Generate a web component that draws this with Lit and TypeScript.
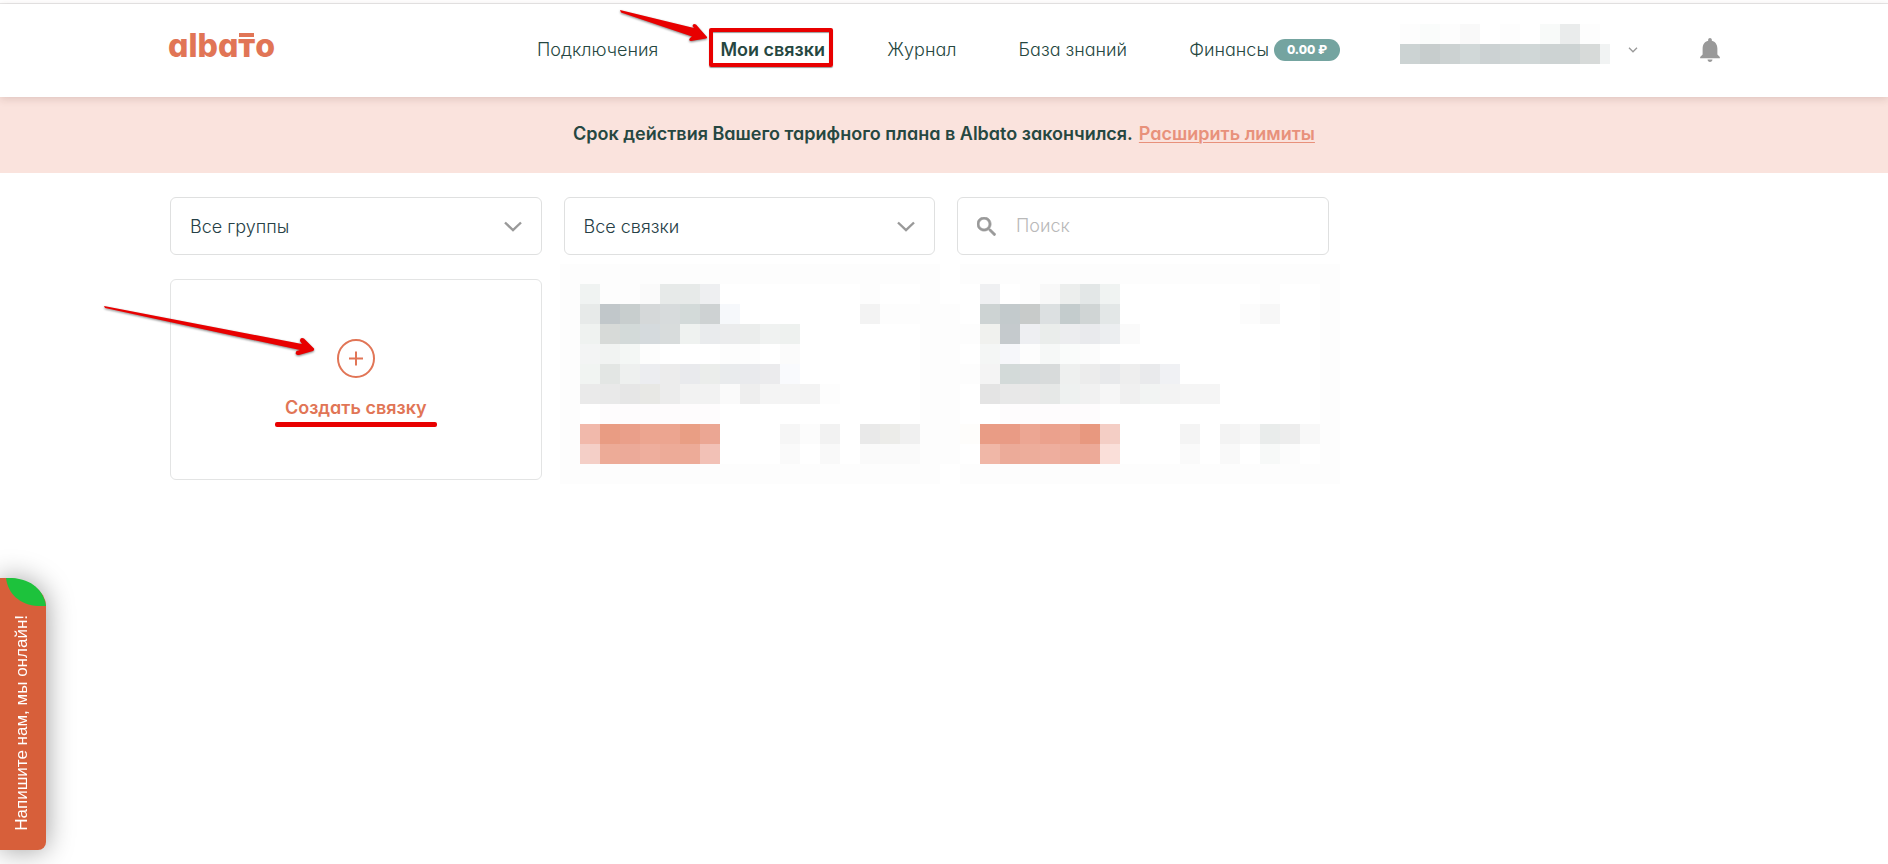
import { LitElement, html, svg, css } from "lit";
import { customElement, property, state } from "lit/decorators.js";

/** One run of equally coloured cells: column, row, length in cells, fill. */
type Run = [number, number, number, string];

const ACCOUNT_CELLS: Run[] = [
  [0, 0, 1, "#fdfdfd"], [1, 0, 1, "#fafcfb"], [2, 0, 1, "#fdfdfd"], [3, 0, 1, "#f9f9f9"],
  [5, 0, 1, "#fdfdfd"], [7, 0, 1, "#f8faf9"], [8, 0, 1, "#eaecec"], [9, 0, 1, "#fdfdfd"],
  [0, 1, 1, "#ccd3d3"], [1, 1, 1, "#c7cdcd"], [2, 1, 1, "#ccd2d2"], [3, 1, 1, "#d1d8d8"],
  [4, 1, 1, "#ccd2d3"], [5, 1, 1, "#cfd5d5"], [6, 1, 1, "#d0d7d7"], [7, 1, 2, "#cdd3d3"],
  [9, 1, 1, "#d7dad9"], [10, 1, 0.5, "#f1f3f3"],
];

const FIRST_CELLS: Run[] = [
  [-1, -1, 19, "#fdfdfd"], [-1, 0, 1, "#fdfdfd"], [17, 0, 1, "#fdfdfd"],
  [0, 0, 1, "#f0f3f2"], [1, 0, 2, "#fdfdfd"], [3, 0, 1, "#fafafa"], [4, 0, 2, "#e7eae9"], [6, 0, 1, "#eeeff1"], [14, 0, 1, "#fdfdfd"],
  [0, 1, 1, "#e7eae9"], [1, 1, 1, "#c1c7ca"], [2, 1, 1, "#c8cece"], [3, 1, 1, "#d5d8d9"], [4, 1, 1, "#d7dbdc"], [5, 1, 1, "#d3dad9"], [6, 1, 1, "#ced2d3"], [7, 1, 1, "#f6f8fb"], [14, 1, 1, "#f3f3f3"], [15, 1, 2, "#fdfdfd"],
  [0, 2, 1, "#eff2f0"], [1, 2, 1, "#d7dad8"], [2, 2, 1, "#d3dad9"], [3, 2, 1, "#d5dadd"], [4, 2, 1, "#d8dcdc"], [5, 2, 1, "#eff2f0"], [6, 2, 1, "#e9ebed"], [7, 2, 1, "#ebeced"], [8, 2, 1, "#ebedec"], [9, 2, 1, "#f0f2f1"], [10, 2, 1, "#eef1ef"],
  [0, 3, 1, "#f3f4f4"], [1, 3, 1, "#f1f3f2"], [2, 3, 1, "#f4f7f5"], [3, 3, 1, "#fdfdfd"], [7, 3, 2, "#fdfdfd"], [10, 3, 1, "#fbfbfb"],
  [0, 4, 1, "#f1f4f2"], [1, 4, 1, "#e3e6e4"], [2, 4, 1, "#eef0ef"], [3, 4, 1, "#ecedf0"], [4, 4, 1, "#ececec"], [5, 4, 1, "#e9eaed"], [6, 4, 1, "#ebedeb"], [7, 4, 1, "#e9ebed"], [8, 4, 1, "#e9eaed"], [9, 4, 1, "#ebebed"], [10, 4, 1, "#f9fafd"],
  [0, 5, 1, "#eaeaea"], [1, 5, 1, "#e9e9e9"], [2, 5, 1, "#e6e6e6"], [3, 5, 1, "#e8e8e5"], [4, 5, 1, "#ececec"], [5, 5, 2, "#f2f2f2"], [7, 5, 1, "#fafafa"], [8, 5, 1, "#eeeeee"], [9, 5, 2, "#f4f4f4"], [11, 5, 1, "#f3f3f3"], [12, 5, 1, "#fdfdfd"],
  [1, 6, 6, "#fefcfd"],
  [0, 7, 1, "#f1b9ab"], [1, 7, 1, "#e99c83"], [2, 7, 1, "#ea9f8a"], [3, 7, 2, "#eca590"], [5, 7, 1, "#e99e84"], [6, 7, 1, "#eba693"], [10, 7, 1, "#f6f6f6"], [11, 7, 1, "#fcfcfc"], [12, 7, 1, "#f2f2f2"], [14, 7, 1, "#e9e9e9"], [15, 7, 1, "#ecece9"], [16, 7, 1, "#f0f0f0"],
  [0, 8, 1, "#f4cfc7"], [1, 8, 1, "#edab97"], [2, 8, 1, "#ecaa99"], [3, 8, 1, "#eeae9d"], [4, 8, 2, "#edab98"], [6, 8, 1, "#f2c1b6"], [10, 8, 1, "#fafafa"], [12, 8, 1, "#f9f9f9"], [14, 8, 3, "#fafafa"],
  [-1, 1, 1, "#fdfdfd"], [-1, 2, 1, "#fdfdfd"], [-1, 3, 1, "#fdfdfd"], [-1, 4, 1, "#fdfdfd"], [-1, 5, 1, "#fdfdfd"], [-1, 6, 1, "#fdfdfd"], [-1, 7, 1, "#fdfdfd"], [-1, 8, 1, "#fdfdfd"],
  [17, 1, 2, "#fdfdfd"], [17, 2, 2, "#fdfdfd"], [17, 3, 2, "#fdfdfd"], [17, 4, 2, "#fdfdfd"], [17, 5, 2, "#fdfdfd"], [17, 6, 2, "#fdfdfd"], [17, 7, 2, "#fdfdfd"], [17, 8, 2, "#fdfdfd"],
  [-1, 9, 19, "#fdfdfd"],
];

const SECOND_CELLS: Run[] = [
  [-1, -1, 19, "#fdfdfd"],
  [0, 0, 1, "#eff0f2"], [2, 0, 1, "#fdfdfd"], [3, 0, 1, "#f8f8f8"], [4, 0, 1, "#eceeed"], [5, 0, 1, "#e3e7e7"], [6, 0, 1, "#f0f3f2"], [14, 0, 1, "#fdfdfd"],
  [0, 1, 1, "#cdd3d3"], [1, 1, 1, "#c3cacc"], [2, 1, 1, "#c8cbca"], [3, 1, 1, "#dce0e1"], [4, 1, 1, "#c4cccd"], [5, 1, 1, "#d0d5d5"], [6, 1, 1, "#e3e7e7"], [13, 1, 1, "#fcfcfc"], [14, 1, 1, "#f7f7f7"],
  [-1, 2, 1, "#fdfdfd"], [0, 2, 1, "#f0f1ee"], [1, 2, 1, "#c5cacd"], [2, 2, 1, "#eeeff2"], [3, 2, 1, "#eaedeb"], [4, 2, 1, "#ecedef"], [5, 2, 1, "#e9eaed"], [6, 2, 1, "#eceef0"], [7, 2, 1, "#fafafa"],
  [0, 3, 1, "#f4f6f5"], [1, 3, 1, "#f6f7fa"], [2, 3, 1, "#fdfdfd"], [3, 3, 1, "#f6f8f7"], [4, 3, 1, "#fafcfb"], [5, 3, 1, "#fcfcfc"],
  [-1, 4, 1, "#fdfdfd"], [0, 4, 1, "#f4f4f4"], [1, 4, 1, "#d3dad9"], [2, 4, 1, "#d6dadb"], [3, 4, 1, "#d8dbdb"], [4, 4, 1, "#eef0ef"], [5, 4, 1, "#ececec"], [6, 4, 1, "#e8e9eb"], [7, 4, 1, "#eeeeee"], [8, 4, 1, "#e9eaec"], [9, 4, 1, "#f0f1f4"],
  [0, 5, 1, "#e4e4e4"], [1, 5, 1, "#e8e8e8"], [2, 5, 1, "#e9e8e8"], [3, 5, 1, "#e6e8e7"], [4, 5, 1, "#eef1f0"], [5, 5, 1, "#f1f1f1"], [6, 5, 1, "#f6f6f6"], [7, 5, 1, "#f0f0f0"], [8, 5, 1, "#f2f4f3"], [9, 5, 1, "#f3f3f3"], [10, 5, 2, "#f5f5f5"],
  [1, 6, 5, "#fefcfd"],
  [-1, 7, 1, "#fefdfb"], [0, 7, 1, "#e99c85"], [1, 7, 1, "#e99b85"], [2, 7, 1, "#eca693"], [3, 7, 1, "#eba18d"], [4, 7, 1, "#eba38e"], [5, 7, 1, "#e8987f"], [6, 7, 1, "#f4cec5"], [10, 7, 1, "#f4f4f4"], [12, 7, 1, "#f3f3f3"], [13, 7, 1, "#f7f7f7"], [14, 7, 1, "#e9eceb"], [15, 7, 1, "#ededed"], [16, 7, 1, "#f8f8f8"],
  [0, 8, 1, "#f0b7a7"], [1, 8, 1, "#ecab99"], [2, 8, 1, "#edad9b"], [3, 8, 1, "#eeae9e"], [4, 8, 1, "#edab99"], [5, 8, 1, "#edaa98"], [6, 8, 1, "#fadfd9"], [10, 8, 1, "#fafafa"], [12, 8, 1, "#f9f9f9"], [14, 8, 1, "#f7f9f8"], [15, 8, 1, "#fcfcfc"],
  [17, 0, 1, "#fdfdfd"], [17, 1, 1, "#fdfdfd"], [17, 2, 1, "#fdfdfd"], [17, 3, 1, "#fdfdfd"], [17, 4, 1, "#fdfdfd"], [17, 5, 1, "#fdfdfd"], [17, 6, 1, "#fdfdfd"], [17, 7, 1, "#fdfdfd"], [17, 8, 1, "#fdfdfd"],
  [-1, 9, 19, "#fdfdfd"],
];

const cells = (runs: Run[], left: number, top: number) =>
  runs.map(
    ([col, row, length, fill]) =>
      svg`<rect x=${left + col * 20} y=${top + row * 20} width=${length * 20} height="20" fill=${fill} />`
  );

@customElement("albato-select")
class AlbatoSelect extends LitElement {
  @property() label = "";
  @property({ type: Array }) options: string[] = [];

  static styles = css`
    :host {
      display: block;
    }
    .field {
      display: grid;
      align-items: center;
    }
    .control,
    .arrow {
      grid-area: 1 / 1;
    }
    .control {
      appearance: none;
      box-sizing: border-box;
      width: 100%;
      height: 58px;
      margin: 0;
      padding: 0 48px 0 19px;
      border: 1px solid #dfe0e0;
      border-radius: 6px;
      background: #fff;
      color: #264046;
      font-family: inherit;
      font-size: 18px;
      font-weight: 300;
      font-feature-settings: inherit;
    }
    .arrow {
      justify-self: end;
      margin-right: 20px;
      pointer-events: none;
    }
  `;

  render() {
    return html`
      <div class="field">
        <select class="control" aria-label=${this.label}>
          ${this.options.map((o) => html`<option>${o}</option>`)}
        </select>
        <svg class="arrow" width="18" height="11" viewBox="0 0 18 11" fill="none" stroke="#999" stroke-width="2.400">
          <path d="M1 1.500l8 7.600L17 1.500" />
        </svg>
      </div>
    `;
  }
}

@customElement("app-root")
class AppRoot extends LitElement {
  @state() query = "";

  static styles = css`
    :host {
      display: block;
      position: relative;
      min-height: 100vh;
      background: #fff;
      color: #264741;
      font-family: Inter, "Open Sans", "Liberation Sans", sans-serif;
      font-size: 18px;
      font-weight: 300;
      line-height: 24px;
      font-feature-settings: "cv11";
      overflow-x: clip;
    }
    a {
      color: inherit;
      text-decoration: none;
    }
    .strip {
      height: 3px;
      border-bottom: 1px solid #e9e9e9;
    }
    .header {
      position: relative;
      z-index: 1;
      background: #fff;
      box-shadow: 0 2px 8px rgba(90, 40, 30, 0.16);
    }
    .bar {
      box-sizing: border-box;
      display: flex;
      align-items: center;
      gap: 60px;
      max-width: 1552px;
      height: 93px;
      margin: 0 auto;
      padding-bottom: 2px;
    }
    .logo {
      display: flex;
      margin-right: auto;
      padding-bottom: 8px;
      color: #e17556;
      font-size: 32px;
      font-weight: 800;
      line-height: 36px;
    }
    .tee {
      position: relative;
    }
    .tee::before {
      content: "";
      position: absolute;
      top: 5px;
      left: 1px;
      right: 1px;
      height: 4px;
      background: currentColor;
    }
    .nav {
      display: flex;
      justify-content: space-between;
      flex: 0 1 803px;
    }
    .current {
      position: relative;
      font-weight: 600;
    }
    .frame {
      position: absolute;
      inset: -10px -8px -5px -11px;
      border: 4px solid #e80000;
      border-radius: 2px;
      box-shadow: 0 1px 1px rgba(0, 0, 0, 0.4), inset 0 1px 1px rgba(0, 0, 0, 0.4);
    }
    .pointer {
      position: absolute;
      top: -28px;
      left: -101px;
      filter: drop-shadow(0 1px 1px rgba(0, 0, 0, 0.5));
    }
    .money {
      display: flex;
      align-items: center;
      gap: 5px;
    }
    .badge {
      box-sizing: border-box;
      min-width: 66px;
      padding: 0 10px;
      border-radius: 11px;
      background: #74a4a0;
      color: #fff;
      font-size: 12px;
      font-weight: 800;
      line-height: 22px;
      text-align: center;
    }
    .plain {
      display: flex;
      align-items: center;
      padding: 0;
      border: 0;
      background: none;
      color: inherit;
      font: inherit;
      cursor: pointer;
    }
    .account {
      justify-content: space-between;
      width: 240px;
      padding-right: 2px;
      box-sizing: border-box;
    }
    .account-name {
      margin-bottom: 10px;
    }
    .notice {
      display: flex;
      justify-content: center;
      align-items: center;
      gap: 6px;
      min-height: 74px;
      padding-bottom: 2px;
      background: #fae3dd;
      font-weight: 600;
    }
    .notice-text {
      margin: 0;
    }
    .notice-link {
      color: #e8917b;
      text-decoration: underline;
      text-decoration-thickness: 1px;
      text-underline-offset: 2px;
    }
    .main {
      display: grid;
      grid-template-columns: repeat(4, minmax(0, 1fr));
      gap: 24px 22px;
      max-width: 1552px;
      margin: 0 auto;
      padding: 24px 0 24px 4px;
    }
    .search {
      box-sizing: border-box;
      display: flex;
      align-items: center;
      gap: 20px;
      height: 58px;
      padding: 0 19px;
      border: 1px solid #dfe0e0;
      border-radius: 6px;
      background: #fff;
    }
    .search-input {
      flex: 1;
      min-width: 0;
      padding: 0;
      border: 0;
      outline: 0;
      background: none;
      color: #264046;
      font: inherit;
      font-feature-settings: inherit;
    }
    .search-input::placeholder {
      color: #b9b9b9;
      opacity: 1;
    }
    .create {
      grid-column: 1;
      box-sizing: border-box;
      position: relative;
      display: flex;
      flex-direction: column;
      align-items: center;
      justify-content: center;
      gap: 18px;
      height: 201px;
      border: 1px solid #e3e4e4;
      border-radius: 6px;
      background: #fff;
      color: #e17556;
      font-weight: 600;
    }
    .create-label {
      position: relative;
    }
    .underline {
      position: absolute;
      left: -10px;
      right: -10px;
      top: 26px;
      height: 5px;
      border-radius: 2px;
      background: #e80000;
    }
    .create-pointer {
      position: absolute;
      left: -68px;
      top: 24px;
      filter: drop-shadow(0 1px 1px rgba(0, 0, 0, 0.5));
    }
    .bundle {
      height: 201px;
    }
    .cells {
      display: block;
      overflow: visible;
      shape-rendering: crispEdges;
    }
    .chat {
      position: fixed;
      left: 0;
      bottom: 14px;
      width: 46px;
      height: 272px;
      border-radius: 0 40px 8px 0 / 0 28px 8px 0;
      background: #d75f3a;
      box-shadow: 0 0 28px rgba(0, 0, 0, 0.4);
      color: #fff;
      justify-content: flex-end;
      flex-direction: column;
      font-family: "Liberation Sans", Arial, sans-serif;
      font-size: 17px;
      font-weight: 400;
      line-height: 20px;
    }
    .leaf {
      position: absolute;
      top: 0;
      right: 0;
    }
    .chat-text {
      padding-top: 19px;
      margin-right: 2px;
      writing-mode: vertical-rl;
      transform: rotate(180deg);
      white-space: nowrap;
    }
  `;

  render() {
    return html`
      <div class="strip"></div>
      <header class="header">
        <div class="bar">
          <a class="logo" href="#"><span>alba</span><span class="tee">т</span><span>o</span></a>
          <nav class="nav">
            <a href="#">Подключения</a>
            <a class="current" href="#" aria-current="page">
              Мои связки
              <span class="frame"></span>
              <svg class="pointer" width="90" height="34" viewBox="0 0 90 34" fill="#e80000">
                <path d="M1 0L75 18L73.500 16Q74 13 77 14.500L88 27Q88.500 28 87 28.500L72 31Q69 30.500 71 28L73 26.500L2 2.500Z" />
              </svg>
            </a>
            <a href="#">Журнал</a>
            <a href="#">База знаний</a>
            <a class="money" href="#">Финансы<span class="badge">0.00 ₽</span></a>
          </nav>
          <button class="plain account" aria-label="Аккаунт">
            <svg class="cells account-name" width="210" height="39" viewBox="0 0 210 39">
              ${cells(ACCOUNT_CELLS, 0, -1)}
            </svg>
            <svg width="10" height="6" viewBox="0 0 10 6" fill="none" stroke="#999" stroke-width="1.300">
              <path d="M1 .8l4 4 4-4" />
            </svg>
          </button>
          <button class="plain" aria-label="Уведомления">
            <svg width="20" height="24" viewBox="4 2.500 16 19.500" fill="#999">
              <path d="M12 22c1.100 0 2-.9 2-2h-4c0 1.100.89 2 2 2zm6-6v-5c0-3.070-1.640-5.640-4.500-6.320V4c0-.83-.67-1.500-1.500-1.500s-1.500.67-1.500 1.500v.68C7.630 5.360 6 7.920 6 11v5l-2 2v1h16v-1l-2-2z" />
            </svg>
          </button>
        </div>
      </header>
      <section class="notice">
        <p class="notice-text">Срок действия Вашего тарифного плана в Albato закончился.</p>
        <a class="notice-link" href="#">Расширить лимиты</a>
      </section>
      <main class="main">
        <albato-select label="Группа" .options=${["Все группы"]}></albato-select>
        <albato-select label="Связки" .options=${["Все связки"]}></albato-select>
        <label class="search">
          <svg width="19" height="19" viewBox="3 3 17.500 17.500" fill="#999" stroke="#999" stroke-width=".6">
            <path d="M15.500 14h-.79l-.28-.27C15.410 12.590 16 11.110 16 9.500 16 5.910 13.090 3 9.500 3S3 5.910 3 9.500 5.910 16 9.500 16c1.610 0 3.090-.59 4.230-1.570l.27.28v.79l5 4.990L20.490 19l-4.990-5zm-6 0C7.010 14 5 11.990 5 9.500S7.010 5 9.500 5 14 7.010 14 9.500 11.990 14 9.500 14z" />
          </svg>
          <input
            class="search-input"
            type="text"
            aria-label="Поиск"
            placeholder="Поиск"
            .value=${this.query}
            @input=${(e: Event) => (this.query = (e.target as HTMLInputElement).value)}
          />
        </label>
        <a class="create" href="#">
          <svg width="38" height="39" viewBox="0 0 38 39" fill="none" stroke="#e17556" stroke-width="2">
            <ellipse cx="19" cy="19.500" rx="18" ry="18.500" />
            <path d="M19 12.500v14M12 19.500h14" />
          </svg>
          <span class="create-label">Создать связку<span class="underline"></span></span>
          <svg class="create-pointer" width="212" height="54" viewBox="0 0 212 54" fill="#e80000">
            <path d="M1 2L199 40L197 37Q197 33 201 34.500L211 44.500Q211.500 46 210 47L196 51Q191 51 193.500 47L197 46L2 4Z" />
          </svg>
        </a>
        <article class="bundle">
          <svg class="cells" width="360" height="201">${cells(FIRST_CELLS, 16, 5)}</svg>
        </article>
        <article class="bundle">
          <svg class="cells" width="360" height="201">${cells(SECOND_CELLS, 23, 5)}</svg>
        </article>
      </main>
      <button class="plain chat">
        <svg class="leaf" width="40" height="28" viewBox="0 0 40 28" fill="#1dc23c">
          <path d="M0 0H6C26 1 38 13 40 28H32C14 27 2 16 0 0Z" />
        </svg>
        <span class="chat-text">Напишите нам, мы онлайн!</span>
      </button>
    `;
  }
}
